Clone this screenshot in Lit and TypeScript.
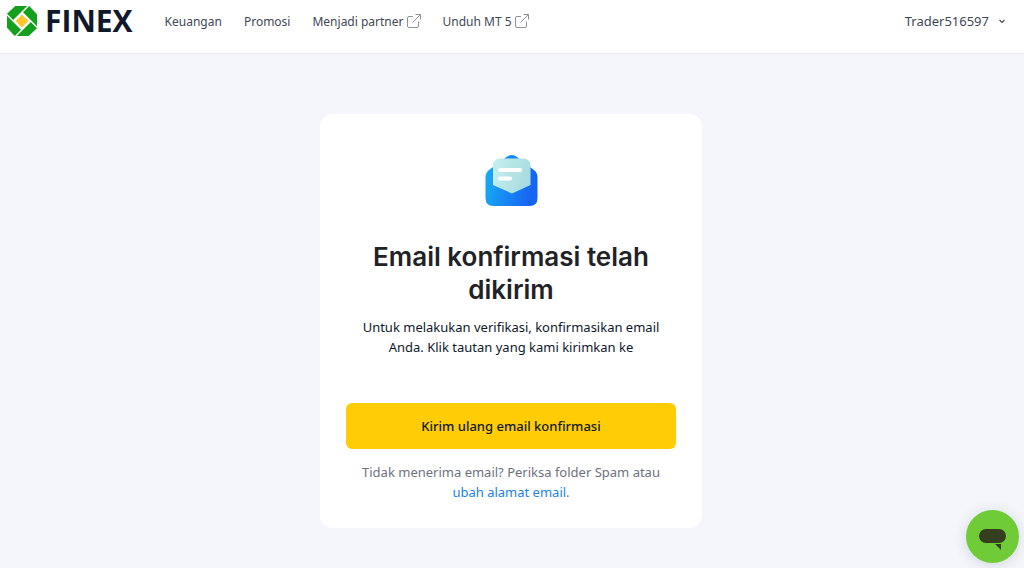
import { LitElement, html, css } from "lit";
import { customElement } from "lit/decorators.js";

@customElement("external-icon")
class ExternalIcon extends LitElement {
  static styles = css`
    :host { display: inline-flex; }
  `;
  render() {
    return html`<svg width="14" height="14" viewBox="0 0 14 14" fill="none" stroke="#8e9299" stroke-width="1" aria-hidden="true">
      <path d="M6 2.5H2A1.5 1.5 0 0 0 .5 4V12A1.5 1.5 0 0 0 2 13.500H10A1.500 1.500 0 0 0 11.500 12V7.500M8.500 .5H13.500V5.500M13.300 .7L5.500 8.500" />
    </svg>`;
  }
}

@customElement("app-root")
class AppRoot extends LitElement {
  static styles = css`
    :host {
      display: flex;
      flex-direction: column;
      min-height: 100vh;
      background: #f4f6fb;
      font-family: "Noto Sans", sans-serif;
      color: #10182b;
    }
    * { box-sizing: border-box; }
    header {
      display: flex;
      align-items: center;
      height: 54px;
      padding: 0 18px 11px 7px;
      background: #fff;
      border-bottom: 1px solid #eceef3;
    }
    a { text-decoration: none; color: inherit; }
    .logo { display: flex; align-items: center; gap: 8px; }
    .logo svg { display: block; }
    .word {
      font: 700 30px/32px "Open Sans", sans-serif;
      color: #10182b;
    }
    nav {
      display: flex;
      gap: 22px;
      margin-left: 32px;
      font-size: 12px;
      line-height: 21px;
      color: #414755;
    }
    nav a { display: flex; align-items: center; gap: 3px; }
    .user {
      display: flex;
      align-items: center;
      gap: 9px;
      margin-left: auto;
      padding: 0;
      border: 0;
      background: none;
      font: 400 13px/20px "Noto Sans", sans-serif;
      color: #414755;
    }
    main {
      flex: 1;
      display: flex;
      justify-content: center;
      align-items: flex-start;
      padding: 60px 2px 40px 0;
    }
    .card {
      width: 382px;
      padding: 40px 26px 26px;
      border-radius: 13px;
      background: #fff;
      text-align: center;
    }
    .mail { display: block; margin: 0 auto 32px; }
    h1 {
      margin: 0 0 11px;
      font: 600 26px/33px "Inter", sans-serif;
      color: #212225;
    }
    p { margin: 0; font-size: 13px; line-height: 20px; }
    .resend {
      display: block;
      width: 100%;
      height: 46px;
      margin: 46px 0 13px;
      border: 0;
      border-radius: 6px;
      background: #ffcc06;
      font: 500 13px/20px "Noto Sans", sans-serif;
      color: #10182b;
    }
    .hint { color: #6d727d; }
    .hint a { color: #1c82e8; }
    .chat {
      position: fixed;
      right: 5px;
      bottom: 5px;
      width: 53px;
      height: 53px;
      padding: 0;
      border: 0;
      border-radius: 50%;
      background: #6fcb36;
      box-shadow: 0 2px 14px rgba(30, 50, 60, 0.16);
    }
    .chat svg { display: block; }
  `;

  render() {
    return html`
      <header>
        <a class="logo" href="#" aria-label="FINEX">
          <svg width="30" height="30" viewBox="0 0 29 29" aria-hidden="true">
            <g fill="#14a01c">
              <path d="M8 0H19.500L6 13.500L0 7.500Z" />
              <path d="M29 8V19.500L15.500 6L21.500 0Z" />
              <path d="M21 29H9.500L23 15.500L29 21.500Z" />
              <path d="M0 21V9.500L13.500 23L7.500 29Z" />
            </g>
            <path fill="#ffc72c" d="M14.500 8.200L20.800 14.500L14.500 20.800L8.200 14.500Z" />
          </svg>
          <span class="word">FINEX</span>
        </a>
        <nav>
          <a href="#">Keuangan</a>
          <a href="#">Promosi</a>
          <a href="#">Menjadi partner <external-icon></external-icon></a>
          <a href="#">Unduh MT 5 <external-icon></external-icon></a>
        </nav>
        <button class="user" type="button">
          Trader516597
          <svg width="8" height="8" viewBox="0 0 8 8" fill="none" stroke="#414755" stroke-width="1.100" aria-hidden="true"><path d="M1.500 3L4 5.500L6.500 3" /></svg>
        </button>
      </header>
      <main>
        <section class="card">
          <svg class="mail" width="54" height="54" viewBox="0 0 54 54" aria-hidden="true">
            <defs>
              <linearGradient id="env" x1="0" x2="1" y1="0" y2="0.200"><stop offset="0" stop-color="#18b1f4" /><stop offset="1" stop-color="#1664f2" /></linearGradient>
              <linearGradient id="sheet" x1="0" x2="1" y1="0" y2="0.300"><stop offset="0" stop-color="#c6f0ee" /><stop offset="1" stop-color="#a9dce0" /></linearGradient>
            </defs>
            <path fill="url(#env)" d="M19 6Q27.500 -4 36 6V13H46L50 16Q53.500 19 53.500 23V44Q53.500 52 45.500 52H9.500Q1.500 52 1.500 44V23Q1.500 19 5 16L9 13H19Z" />
            <path fill="url(#sheet)" d="M15.500 4.500H40A6.500 6.500 0 0 1 46.500 11V31L28 39.500L9 31V11A6.500 6.500 0 0 1 15.500 4.500Z" />
            <path stroke="#fff" stroke-width="4" stroke-linecap="round" d="M16 16H36M16 24.500H26" />
          </svg>
          <h1>Email konfirmasi telah dikirim</h1>
          <p>Untuk melakukan verifikasi, konfirmasikan email Anda. Klik tautan yang kami kirimkan ke</p>
          <button class="resend" type="button">Kirim ulang email konfirmasi</button>
          <p class="hint">Tidak menerima email? Periksa folder Spam atau <a href="#">ubah alamat email</a>.</p>
        </section>
      </main>
      <button class="chat" type="button" aria-label="Chat">
        <svg width="53" height="53" viewBox="0 0 53 53" aria-hidden="true">
          <rect x="13" y="19" width="27" height="14" rx="7" fill="#353f20" />
          <path fill="#353f20" d="M29 34H35V40Z" />
        </svg>
      </button>
    `;
  }
}
